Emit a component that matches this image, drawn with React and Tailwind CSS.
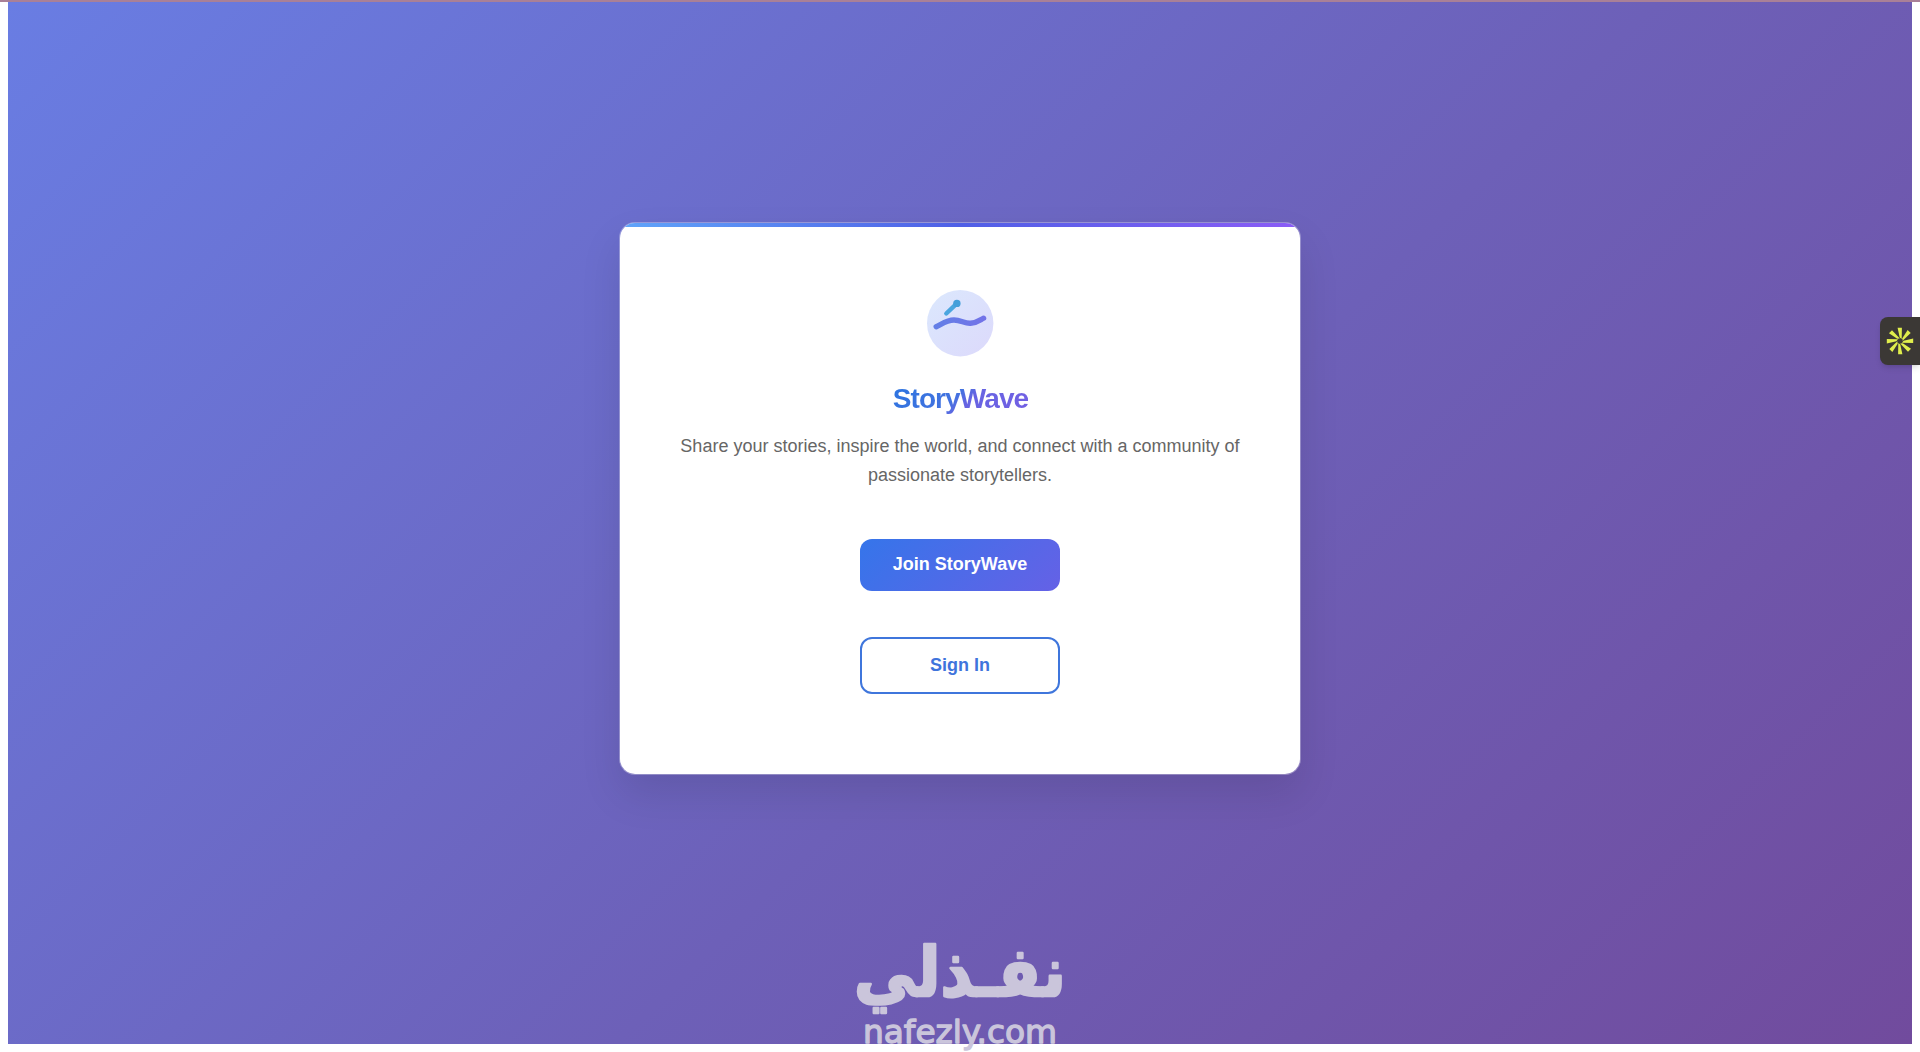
import React from 'react';

const SPOKES = [0, 45, 90, 135, 180, 225, 270, 315];

const WaveLogo = () => (
  <svg width="67" height="67" viewBox="0 0 67 67" fill="none">
    <defs>
      <linearGradient id="disc" x1="0" y1="0" x2="1" y2="1">
        <stop offset="0" stopColor="#dbe8fd" />
        <stop offset="1" stopColor="#dcd9fb" />
      </linearGradient>
      <linearGradient id="wave" gradientUnits="userSpaceOnUse" x1="8" y1="24" x2="58" y2="40">
        <stop offset="0" stopColor="#6280e6" />
        <stop offset="1" stopColor="#7472e8" />
      </linearGradient>
    </defs>
    <circle cx="33.2" cy="33.2" r="33.2" fill="url(#disc)" />
    <path d="M9.2 36.7C15.2 33.8 20 30 27 30C34 30 37.5 33.7 43.5 33.3C50 32.9 53 30 56.6 28.2" stroke="url(#wave)" strokeWidth="5.4" strokeLinecap="round" />
    <path d="M19.3 23.5L29.4 13.8" stroke="#4ba6df" strokeWidth="4.4" strokeLinecap="round" />
    <circle cx="29.9" cy="13.4" r="3.7" fill="#449fda" />
  </svg>
);

const Watermark = () => (
  <svg className="absolute bottom-0 left-[840px] overflow-visible" width="240" height="132" viewBox="0 0 240 132" fill="#cac5db" stroke="#cac5db" strokeLinejoin="round">
    <text x="120" y="76" textAnchor="middle" textLength="212" lengthAdjust="spacingAndGlyphs" direction="rtl" strokeWidth="2.6" className="font-['DejaVu_Sans',sans-serif] text-[68px] font-bold">نفـذلي</text>
    <text x="120" y="123" textAnchor="middle" textLength="194" lengthAdjust="spacingAndGlyphs" strokeWidth="1.3" className="font-['DejaVu_Sans',sans-serif] text-[32px]">nafezly.com</text>
  </svg>
);

const App = () => {
  return (
    <div className="relative h-[1052px] w-[1920px] overflow-hidden bg-white px-2 pb-2 font-['Liberation_Sans',Arial,sans-serif]">
      <main className="flex h-[1044px] items-center justify-center bg-[linear-gradient(135deg,#697de3_0%,#6d60b8_56%,#714b9d_100%)] pb-[47px]">
        <section className="flex h-[553px] w-[682px] flex-col items-center overflow-hidden rounded-2xl border border-white/30 bg-white bg-clip-padding shadow-[0_20px_40px_rgba(0,0,0,0.1)]">
          <div className="h-1 w-full shrink-0 bg-[linear-gradient(90deg,#60a5fa,#4f5fe6_50%,#8b5cf6)]" />
          <div className="mt-[63px]">
            <WaveLogo />
          </div>
          <h1 className="mt-[22px] bg-[linear-gradient(135deg,#2f74e0_10%,#4372e0_46%,#6664e2_56%,#755fe4)] bg-clip-text pl-px text-[28px] leading-[40px] font-bold tracking-[-0.9px] text-transparent">StoryWave</h1>
          <p className="mt-[13px] w-[580px] text-center text-[18px] leading-[28.5px] text-[#666]">
            Share your stories, inspire the world, and connect with a community of passionate storytellers.
          </p>
          <button className="mt-[49.5px] h-[52.5px] w-[200px] shrink-0 rounded-xl bg-[linear-gradient(135deg,#3575ea,#6561e6)] text-[18px] font-bold text-white">Join StoryWave</button>
          <button className="mt-[46px] h-[57px] w-[200px] shrink-0 rounded-xl border-2 border-[#3f76dc] pb-px text-[18px] font-bold text-[#3f74dc]">Sign In</button>
        </section>
      </main>
      <div className="absolute top-0 left-0 h-[2px] w-full bg-[#a98097]" />
      <Watermark />
      <div className="absolute top-[317px] right-0 flex h-12 w-10 items-center justify-center rounded-l-lg bg-[#3b3835] shadow-md">
        <svg width="28" height="28" viewBox="-14 -14 28 28" fill="#e0ee4c">
          {SPOKES.map((angle) => (
            <path key={angle} d="M-2.4 -13.2L1.9 -13.2L1.7 -2L-0.3 -3.6Z" transform={`rotate(${angle})`} />
          ))}
        </svg>
      </div>
    </div>
  );
};

export default App;
